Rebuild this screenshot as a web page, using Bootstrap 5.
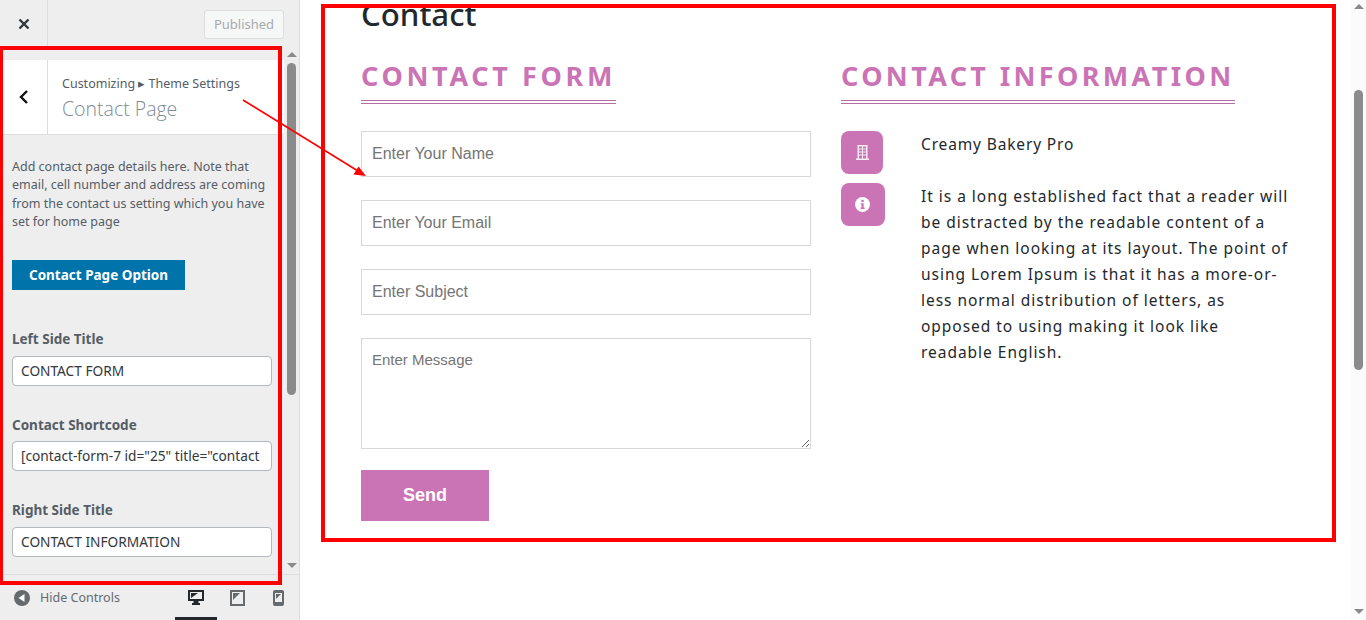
<!DOCTYPE html>
<html lang="en">
<head>
  <meta charset="UTF-8" />
  <meta name="viewport" content="width=device-width, initial-scale=1.0" />
  <title>Contact Page</title>
  <link href="https://cdn.jsdelivr.net/npm/bootstrap@5.3.0/dist/css/bootstrap.min.css" rel="stylesheet" />
  <script src="https://cdn.jsdelivr.net/npm/bootstrap@5.3.0/dist/js/bootstrap.bundle.min.js"></script>
  <style>
    html, body { height: 620px; overflow: hidden; }
    body { font-family: "Noto Sans", "Open Sans", sans-serif; color: #23282d; position: relative; }
    .shell { height: 620px; }

    /* customizer sidebar */
    .side { width: 300px; flex: none; background: #eee; border-right: 1px solid #ddd; }
    .side-top { height: 48px; flex: none; }
    .close-box { width: 48px; border-right: 1px solid #ddd; }
    .published { width: 80px; height: 29px; margin: 10px 15px 0 0; font-size: 13px; color: #a7aaad; background: #f6f7f7; border: 1px solid #ddd; border-radius: 3px; }
    .side-mid { height: 526px; min-height: 0; }
    .side-body { width: 284px; flex: none; overflow: hidden; }
    .gap-bar { height: 12px; }
    .panel-head { height: 75px; background: #fff; border-bottom: 1px solid #ddd; }
    .back-box { width: 48px; border-right: 1px solid #ddd; }
    .crumb { font-size: 12.5px; color: #555d66; line-height: 18px; margin: 15px 0 0 14px; }
    .panel-name { font-family: "Open Sans", "Noto Sans", sans-serif; font-size: 19.5px; font-weight: 300; color: #7f8a94; line-height: 28px; margin: 2px 0 0 14px; }
    .panel-desc { font-size: 12.5px; line-height: 18.4px; color: #555d66; margin: 23px 0 28.400px 12px; width: 262px; }
    .option-btn { display: block; width: 173px; height: 30px; margin-left: 12px; padding: 0; border-radius: 0; background: #0073aa; color: #fff; font-size: 13.5px; font-weight: 700; line-height: 28px; text-align: center; }
    .field-wrap { margin: 29px 0 0 12px; width: 260px; }
    .field-first { margin-top: 39px; }
    .field-label { font-size: 13.5px; font-weight: 700; color: #555d66; line-height: 20px; margin: 0 0 7px; display: block; }
    .field-tight { margin-bottom: 6px; }
    .field-input { height: 30px; padding: 0 8px; font-size: 13.7px; color: #32373c; border: 1px solid #b4b9be; border-radius: 4px; font-family: inherit; white-space: nowrap; overflow: hidden; }
    .bar-track { width: 15px; flex: none; }
    .bar-arrow-up { width: 0; height: 0; border: 5px solid transparent; border-top: 0; border-bottom: 5px solid #8a8a8a; margin: 4px auto 6px; }
    .bar-arrow-down { width: 0; height: 0; border: 5px solid transparent; border-bottom: 0; border-top: 5px solid #8a8a8a; margin: 0 auto 6px; }
    .bar-thumb { width: 9px; background: #8b8b8b; border-radius: 5px; margin: 0 auto; }
    .thumb-side { height: 332px; }
    .thumb-page { height: 280px; }
    .side-foot { height: 46px; flex: none; border-top: 1px solid #ddd; font-size: 12.5px; color: #656a6f; }
    .foot-icon { margin-left: 14px; }
    .foot-label { margin-left: 10px; padding-top: 1px; }
    .device { width: 40px; }
    .device-on { width: 42px; box-shadow: inset 0 -3px 0 #23282d; }
    .device-last { width: 42px; }

    /* previewed page */
    .preview { min-width: 0; background: #fff; overflow: hidden; }
    .page-body { padding-left: 61px; width: 1051px; }
    .columns { gap: 30px; }
    .page-title { font-size: 31.2px; font-weight: 500; line-height: 36px; margin: -4px 0 26px; color: #23282d; }
    .section-title { display: inline-block; font-size: 27px; font-weight: 700; letter-spacing: 3.65px; line-height: 36px; color: #cb74b5; padding-bottom: 6px; border-bottom: 4px double #b66ea6; margin: 0 0 27px; white-space: nowrap; }
    .section-title.longer { letter-spacing: 3.35px; }
    .form-side { width: 450px; flex: none; }
    .form-side .form-control { height: 46px; border: 1px solid #d8d8d8; border-radius: 0; padding: 0 10px; margin-bottom: 23px; font-family: "Liberation Sans", Arial, sans-serif; font-size: 16px; }
    .form-side .form-control::placeholder { color: #757575; opacity: 1; }
    .form-side textarea.form-control { height: 111px; padding-top: 10px; font-size: 15px; margin-bottom: 21px; }
    .send-btn { width: 128px; height: 51px; padding: 0; border-radius: 0; background: #cb74b5; color: #fff; font-family: "Liberation Sans", Arial, sans-serif; font-size: 18px; font-weight: 700; }
    .info-side { width: 450px; flex: none; }
    .icon-col { width: 80px; flex: none; }
    .icon-tile { width: 42px; height: 43px; background: #cb74b5; border-radius: 8px; margin-bottom: 9px; }
    .icon-tile.wider { width: 44px; padding-right: 2px; }
    .info-text { font-size: 15.5px; letter-spacing: .97px; line-height: 26px; color: #23282d; width: 372px; }
    .info-name { margin: 0 0 26px; letter-spacing: .85px; }
    .page-bar { width: 15px; flex: none; background: #fbfbfb; }
    .arrow-page { margin-bottom: 81px; }

    /* red annotations over the screenshot */
    .mark-box { position: absolute; border: 4px solid #f00; pointer-events: none; }
    .mark-side { left: 0; top: 46px; width: 282px; height: 539px; border-left-width: 3px; }
    .mark-page { left: 321px; top: 4px; width: 1015px; height: 538px; }
    .mark-arrow { position: absolute; left: 0; top: 0; pointer-events: none; }
  </style>
</head>
<body>
  <div class="shell d-flex">
    <aside class="side d-flex flex-column">
      <div class="side-top d-flex justify-content-between">
        <div class="close-box d-flex align-items-center justify-content-center">
          <svg width="14" height="14" viewBox="0 0 14 14"><path d="M2.500 2.500l9 9M11.500 2.500l-9 9" stroke="#32373c" stroke-width="2.4" fill="none"/></svg>
        </div>
        <div class="published d-flex align-items-center justify-content-center">Published</div>
      </div>
      <div class="side-mid d-flex">
        <div class="side-body">
          <div class="gap-bar"></div>
          <div class="panel-head d-flex">
            <div class="back-box d-flex align-items-center justify-content-center">
              <svg width="12" height="16" viewBox="0 0 12 16"><path d="M9 2L3 8l6 6" stroke="#111" stroke-width="2.4" fill="none"/></svg>
            </div>
            <div>
              <div class="crumb">Customizing ▸ Theme Settings</div>
              <div class="panel-name">Contact Page</div>
            </div>
          </div>
          <p class="panel-desc">Add contact page details here. Note that email, cell number and address are coming from the contact us setting which you have set for home page</p>
          <button class="btn option-btn" type="button">Contact Page Option</button>
          <div class="field-wrap field-first">
            <label class="field-label">Left Side Title</label>
            <div class="field-input form-control d-flex align-items-center">CONTACT FORM</div>
          </div>
          <div class="field-wrap">
            <label class="field-label field-tight">Contact Shortcode</label>
            <div class="field-input form-control d-flex align-items-center">[contact-form-7 id="25" title="contact</div>
          </div>
          <div class="field-wrap">
            <label class="field-label">Right Side Title</label>
            <div class="field-input form-control d-flex align-items-center">CONTACT INFORMATION</div>
          </div>
        </div>
        <div class="bar-track d-flex flex-column">
          <div class="bar-arrow-up"></div>
          <div class="bar-thumb thumb-side"></div>
          <div class="flex-grow-1"></div>
          <div class="bar-arrow-down"></div>
        </div>
      </div>
      <div class="side-foot d-flex align-items-center">
        <svg class="foot-icon" width="16" height="16" viewBox="0 0 16 16"><circle cx="8" cy="8" r="8" fill="#656a6f"/><path d="M10.500 4v8L4.500 8z" fill="#fff"/></svg>
        <span class="foot-label">Hide Controls</span>
        <div class="ms-auto d-flex align-self-stretch">
          <div class="device device-on d-flex align-items-center justify-content-center">
            <svg width="16" height="15" viewBox="0 0 16 15"><path d="M0 0h16v11h-5.500v2H12v2H4v-2h1.500v-2H0zM2 2v7h12V2z" fill="#23282d" fill-rule="evenodd"/><path d="M3 3h7L3 8z" fill="#23282d"/></svg>
          </div>
          <div class="device d-flex align-items-center justify-content-center">
            <svg width="15" height="16" viewBox="0 0 15 16"><path d="M0 0h15v16H0zM2 2v12h11V2z" fill="#656a6f" fill-rule="evenodd"/><path d="M3 3h7L3 10z" fill="#656a6f"/></svg>
          </div>
          <div class="device device-last d-flex align-items-center justify-content-center">
            <svg width="11" height="16" viewBox="0 0 11 16"><path d="M2 0h7a2 2 0 0 1 2 2v12a2 2 0 0 1-2 2H2a2 2 0 0 1-2-2V2a2 2 0 0 1 2-2zM2 3v9h7V3z" fill="#656a6f" fill-rule="evenodd"/><path d="M3 4h5L3 9z" fill="#656a6f"/></svg>
          </div>
        </div>
      </div>
    </aside>

    <main class="preview flex-grow-1">
      <div class="page-body">
        <h1 class="page-title">Contact</h1>
        <div class="d-flex columns">
          <section class="form-side">
            <h2 class="section-title">CONTACT FORM</h2>
            <input class="form-control" type="text" placeholder="Enter Your Name" />
            <input class="form-control" type="email" placeholder="Enter Your Email" />
            <input class="form-control" type="text" placeholder="Enter Subject" />
            <textarea class="form-control" placeholder="Enter Message"></textarea>
            <button class="btn send-btn" type="button">Send</button>
          </section>
          <section class="info-side">
            <h2 class="section-title longer">CONTACT INFORMATION</h2>
            <div class="d-flex">
              <div class="icon-col">
                <div class="icon-tile d-flex align-items-center justify-content-center">
                  <svg width="13" height="15" viewBox="0 0 13 15"><path d="M1.500 0h10v13.500H13V15H0v-1.500h1.500zM3 1.500v2h3v-2zM7 1.500v2h3v-2zM3 4.500v2h3v-2zM7 4.500v2h3v-2zM3 7.500v2h3v-2zM7 7.500v2h3v-2zM3 10.500v3h3v-3zM7 10.500v3h3v-3z" fill="#fff" fill-opacity=".85" fill-rule="evenodd"/></svg>
                </div>
                <div class="icon-tile wider d-flex align-items-center justify-content-center">
                  <svg width="15" height="15" viewBox="0 0 15 15"><circle cx="7.500" cy="7.500" r="7.500" fill="#fff"/><rect x="6.300" y="2.800" width="2.400" height="2.200" fill="#cb74b5"/><path d="M5.600 6.200h3.100v4.400h1v1.300H5.500v-1.300h1V7.500h-.9z" fill="#cb74b5"/></svg>
                </div>
              </div>
              <div class="info-text">
                <p class="info-name">Creamy Bakery Pro</p>
                <p class="mb-0">It is a long established fact that a reader will be distracted by the readable content of a page when looking at its layout. The point of using Lorem Ipsum is that it has a more-or-less normal distribution of letters, as opposed to using making it look like readable English.</p>
              </div>
            </div>
          </section>
        </div>
      </div>
    </main>

    <div class="page-bar d-flex flex-column">
      <div class="bar-arrow-up arrow-page"></div>
      <div class="bar-thumb thumb-page"></div>
      <div class="flex-grow-1"></div>
      <div class="bar-arrow-down"></div>
    </div>
  </div>

  <div class="mark-box mark-side"></div>
  <div class="mark-box mark-page"></div>
  <svg class="mark-arrow" width="1366" height="620" viewBox="0 0 1366 620">
    <path d="M243 100L358 171" stroke="#f00" stroke-width="1.6" fill="none"/>
    <path d="M366 176l-12.500-1.500 5-8z" fill="#f00"/>
  </svg>
</body>
</html>
